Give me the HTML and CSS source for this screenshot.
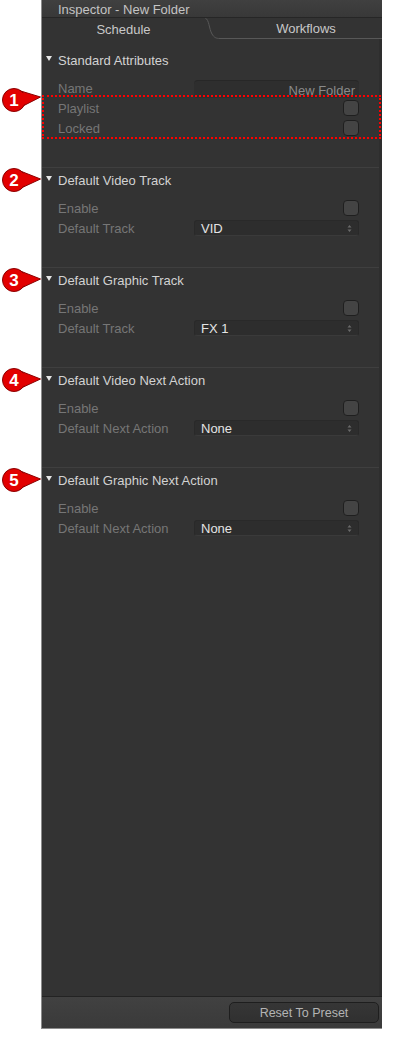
FILE: index.html
```html
<!DOCTYPE html>
<html>
<head>
<meta charset="utf-8">
<link rel="stylesheet" href="styles.css">
</head>
<body>
<div class="page">
  <div class="gutter"></div>
  <div class="panel">
    <div class="titlebar">Inspector - New Folder</div>
    <div class="tabbar">
      <div class="tab tab-active">Schedule</div>
      <svg class="tab-curve" width="15" height="21" viewBox="0 0 15 21"><path d="M0.5 0.5 C4 1 4 11 7 16 C9 19.5 11 20.5 15 20.5" fill="none" stroke="#585858" stroke-width="1"/></svg>
      <div class="tab tab-other">Workflows</div>
    </div>
    <div class="content">
      <section class="section first">
        <div class="sec-head"><span class="tri"></span>Standard Attributes</div>
        <div class="rows">
          <div class="row"><span class="label">Name</span><div class="field">New Folder</div></div>
          <div class="highlight">
            <svg class="badge badge-hl" width="42" height="26" viewBox="0 0 42 26"><polygon points="19,3.5 40.5,10 19,21" fill="#e20000" stroke="#8a0000" stroke-width="1"/><circle cx="14" cy="13" r="11.5" fill="#e20000" stroke="#8a0000" stroke-width="1"/><polygon points="21,5.5 38.5,10 21,19" fill="#e20000"/><text x="14" y="18.5" text-anchor="middle" class="badge-num">1</text></svg>
            <div class="row"><span class="label">Playlist</span><div class="ctrl-end"><span class="check"></span></div></div>
            <div class="row"><span class="label">Locked</span><div class="ctrl-end"><span class="check"></span></div></div>
          </div>
        </div>
      </section>
      <section class="section">
        <div class="sec-head"><svg class="badge" width="42" height="26" viewBox="0 0 42 26"><polygon points="19,3.5 40.5,12 19,22" fill="#e20000" stroke="#8a0000" stroke-width="1"/><circle cx="14" cy="13" r="11.5" fill="#e20000" stroke="#8a0000" stroke-width="1"/><polygon points="21,5.5 38.5,12 21,20" fill="#e20000"/><text x="14" y="18.5" text-anchor="middle" class="badge-num">2</text></svg><span class="tri"></span>Default Video Track</div>
        <div class="rows">
          <div class="row"><span class="label">Enable</span><div class="ctrl-end"><span class="check"></span></div></div>
          <div class="row"><span class="label">Default Track</span><div class="popup"><span>VID</span><svg class="updown" width="5" height="9" viewBox="0 0 5 9"><path d="M0.5 3.5 L2.5 1 L4.5 3.5 Z M0.5 5.5 L2.5 8 L4.5 5.5 Z" fill="#6a6a6a"/></svg></div></div>
        </div>
      </section>
      <section class="section">
        <div class="sec-head"><svg class="badge" width="42" height="26" viewBox="0 0 42 26"><polygon points="19,3.5 40.5,12 19,22" fill="#e20000" stroke="#8a0000" stroke-width="1"/><circle cx="14" cy="13" r="11.5" fill="#e20000" stroke="#8a0000" stroke-width="1"/><polygon points="21,5.5 38.5,12 21,20" fill="#e20000"/><text x="14" y="18.5" text-anchor="middle" class="badge-num">3</text></svg><span class="tri"></span>Default Graphic Track</div>
        <div class="rows">
          <div class="row"><span class="label">Enable</span><div class="ctrl-end"><span class="check"></span></div></div>
          <div class="row"><span class="label">Default Track</span><div class="popup"><span>FX 1</span><svg class="updown" width="5" height="9" viewBox="0 0 5 9"><path d="M0.5 3.5 L2.5 1 L4.5 3.5 Z M0.5 5.5 L2.5 8 L4.5 5.5 Z" fill="#6a6a6a"/></svg></div></div>
        </div>
      </section>
      <section class="section">
        <div class="sec-head"><svg class="badge" width="42" height="26" viewBox="0 0 42 26"><polygon points="19,3.5 40.5,12 19,22" fill="#e20000" stroke="#8a0000" stroke-width="1"/><circle cx="14" cy="13" r="11.5" fill="#e20000" stroke="#8a0000" stroke-width="1"/><polygon points="21,5.5 38.5,12 21,20" fill="#e20000"/><text x="14" y="18.5" text-anchor="middle" class="badge-num">4</text></svg><span class="tri"></span>Default Video Next Action</div>
        <div class="rows">
          <div class="row"><span class="label">Enable</span><div class="ctrl-end"><span class="check"></span></div></div>
          <div class="row"><span class="label">Default Next Action</span><div class="popup"><span>None</span><svg class="updown" width="5" height="9" viewBox="0 0 5 9"><path d="M0.5 3.5 L2.5 1 L4.5 3.5 Z M0.5 5.5 L2.5 8 L4.5 5.5 Z" fill="#6a6a6a"/></svg></div></div>
        </div>
      </section>
      <section class="section">
        <div class="sec-head"><svg class="badge" width="42" height="26" viewBox="0 0 42 26"><polygon points="19,3.5 40.5,12 19,22" fill="#e20000" stroke="#8a0000" stroke-width="1"/><circle cx="14" cy="13" r="11.5" fill="#e20000" stroke="#8a0000" stroke-width="1"/><polygon points="21,5.5 38.5,12 21,20" fill="#e20000"/><text x="14" y="18.5" text-anchor="middle" class="badge-num">5</text></svg><span class="tri"></span>Default Graphic Next Action</div>
        <div class="rows">
          <div class="row"><span class="label">Enable</span><div class="ctrl-end"><span class="check"></span></div></div>
          <div class="row"><span class="label">Default Next Action</span><div class="popup"><span>None</span><svg class="updown" width="5" height="9" viewBox="0 0 5 9"><path d="M0.5 3.5 L2.5 1 L4.5 3.5 Z M0.5 5.5 L2.5 8 L4.5 5.5 Z" fill="#6a6a6a"/></svg></div></div>
        </div>
      </section>
    </div>
    <div class="footer">
      <button class="reset">Reset To Preset</button>
    </div>
  </div>
</div>
</body>
</html>
```
FILE: styles.css
```css
* { box-sizing: border-box; }
html, body { margin: 0; padding: 0; background: #ffffff; }
body { font-family: "Liberation Sans", Arial, sans-serif; font-size: 13px; }

.page { display: flex; width: 400px; height: 1048px; }
.gutter { width: 41px; flex: none; }
.panel {
  width: 341px;
  height: 1029px;
  flex: none;
  display: flex;
  flex-direction: column;
  background: #333333;
  border-left: 1px solid #8c8c8c;
  border-bottom: 1px solid #8c8c8c;
}

.titlebar {
  height: 18px;
  padding-left: 16px;
  line-height: 19px;
  color: #c4c4c4;
  font-size: 13px;
  background: linear-gradient(#404040, #383838);
  border-bottom: 1px solid #262626;
}

.tabbar { height: 21px; display: flex; align-items: stretch; }
.tab { display: flex; align-items: center; justify-content: center; color: #c8c8c8; font-size: 13px; padding-top: 1px; }
.tab-active { width: 163px; }
.tab-curve { flex: none; display: block; }
.tab-other { flex: 1; border-bottom: 1px solid #585858; padding-left: 10px; }

.content { flex: 1; border-right: 3px solid #2e2e2e; }

.section { position: relative; padding-bottom: 29px; border-top: 1px solid #3f3f3f; }
.section.first { border-top: none; padding-top: 9px; }

.sec-head {
  position: relative;
  height: 24px;
  display: flex;
  align-items: center;
  color: #d2d2d2;
  font-size: 13px;
}
.tri {
  width: 0; height: 0;
  margin-left: 4px;
  margin-right: 6px;
  margin-bottom: 3px;
  border-left: 3px solid transparent;
  border-right: 3px solid transparent;
  border-top: 5px solid #e6e6e6;
}

.badge { position: absolute; left: -42px; top: -1px; display: block; overflow: visible; }
.badge-num { font-family: "Liberation Sans", Arial, sans-serif; font-weight: bold; font-size: 17px; fill: #ffffff; }

.rows { margin-top: 6px; }
.row {
  height: 20px;
  display: flex;
  align-items: center;
  padding: 0 20px 0 16px;
}
.label { width: 136px; flex: none; color: #767676; font-size: 13px; }

.highlight { position: relative; }
.highlight::after {
  content: "";
  position: absolute;
  left: 0; right: -2px; top: -3px; bottom: -1px;
  border: 2px dotted #ff0000;
  pointer-events: none;
}
.badge-hl { top: -11px; }

.field {
  flex: 1;
  height: 18px;
  margin-top: 1px;
  border-radius: 4px;
  background: #2e2e2e;
  border-top: 1px solid #272727;
  color: #8a8a8a;
  text-align: right;
  padding-right: 4px;
  line-height: 20px;
  font-size: 13px;
}

.ctrl-end { flex: 1; display: flex; justify-content: flex-end; }
.check {
  display: block;
  width: 16px; height: 16px;
  border-radius: 4px;
  background: #444444;
  border: 1px solid #1f1f1f;
}

.popup {
  flex: 1;
  height: 16px;
  display: flex;
  align-items: center;
  justify-content: space-between;
  padding: 0 6px 0 6px;
  border-radius: 3px;
  background: #2d2d2d;
  border: 1px solid #292929;
  border-bottom-color: #3a3a3a;
  color: #e4e4e4;
  font-size: 13px;
}
.updown { display: block; }

.footer {
  height: 32px;
  display: flex;
  justify-content: flex-end;
  align-items: flex-start;
  padding: 5px 3px 0 0;
  border-top: 1px solid #232323;
  background: linear-gradient(#414141, #3a3a3a);
}
.reset {
  width: 150px;
  height: 21px;
  border-radius: 5px;
  border: 1px solid #1e1e1e;
  background: linear-gradient(#363636, #303030);
  color: #b4b4b4;
  font-family: "Liberation Sans", Arial, sans-serif;
  font-size: 12.5px;
  padding: 0;
}
```
